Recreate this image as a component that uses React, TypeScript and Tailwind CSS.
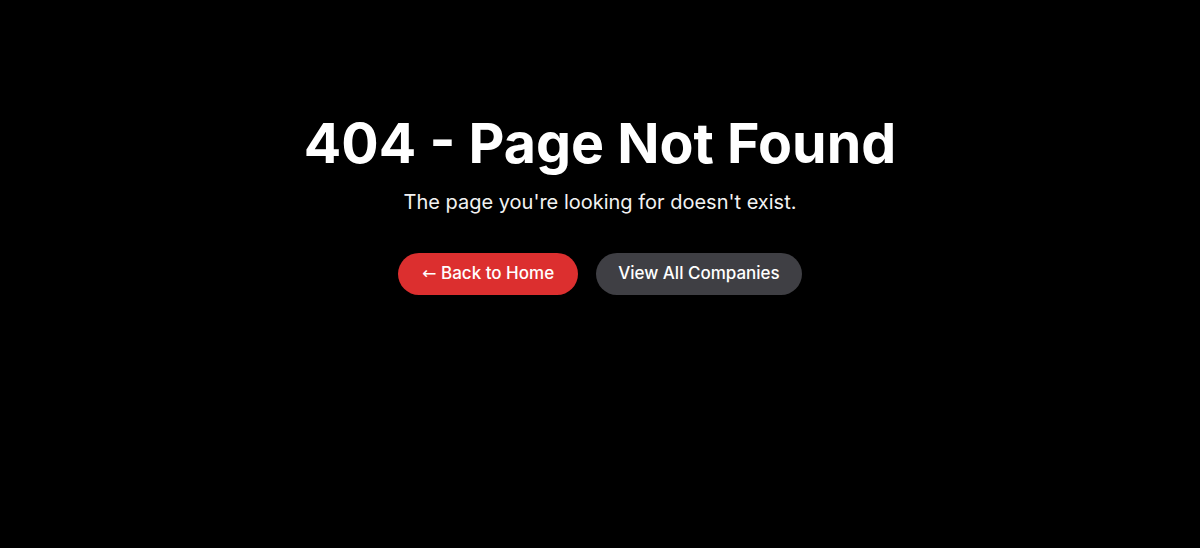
export default function App() {
  return (
    <div className="min-h-[548px] w-full bg-black text-white font-['Inter','Noto_Sans',sans-serif]">
      <div className="flex flex-col items-center pt-[110px]">
        <h1 className="text-[55.5px] font-bold leading-[66px]">404 - Page Not Found</h1>
        <p className="mt-[11px] text-[20px] leading-[30px] text-[#f2f2f2]">The page you're looking for doesn't exist.</p>
        <div className="mt-[36px] flex gap-[18px]">
          <button className="h-[42px] rounded-full bg-[#dc2f2f] px-[24px] text-[17px] font-medium text-white">
            <span className="font-['DejaVu_Sans',sans-serif] font-normal">←</span> Back to Home
          </button>
          <button className="h-[42px] rounded-full bg-[#3f3f44] px-[22px] text-[17px] font-medium text-white">View All Companies</button>
        </div>
      </div>
    </div>
  );
}
